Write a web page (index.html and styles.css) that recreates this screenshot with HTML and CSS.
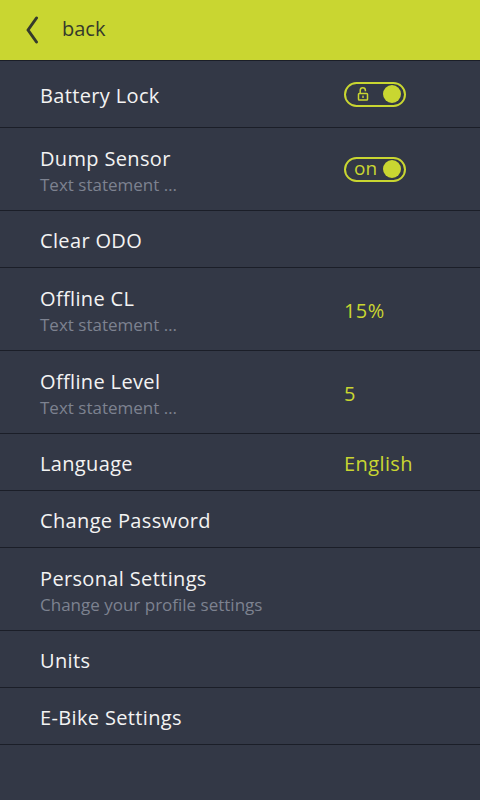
FILE: index.html
```html
<!DOCTYPE html>
<html lang="en">
<head>
  <meta charset="UTF-8">
  <meta name="viewport" content="width=device-width, initial-scale=1.0">
  <title>Settings</title>
  <link rel="stylesheet" href="styles.css">
</head>
<body>

  <header class="topbar">
    <svg class="back-icon" width="14" height="28" viewBox="0 0 14 28">
      <path d="M11.5 2 L3 14 L11.5 26" fill="none" stroke="#353a2c" stroke-width="3" stroke-linecap="round" stroke-linejoin="round"/>
    </svg>
    <span class="back-label">back</span>
  </header>

  <ul class="settings">
    <li class="row row-first">
      <div class="label">
        <span class="title">Battery Lock</span>
      </div>
      <div class="value">
        <span class="toggle">
          <svg class="lock" width="12" height="15" viewBox="0 0 12 15">
            <path d="M3.2 7.5 V4.4 a2.6 2.6 0 0 1 5.2 0 V5.2" fill="none" stroke="#c9d631" stroke-width="1.5"/>
            <rect x="1.5" y="7.5" width="9" height="6.5" rx="0.8" fill="none" stroke="#c9d631" stroke-width="1.5"/>
            <rect x="5.3" y="9.6" width="1.4" height="2.4" fill="#c9d631"/>
          </svg>
          <span class="knob"></span>
        </span>
      </div>
    </li>
    <li class="row row-tall">
      <div class="label">
        <span class="title">Dump Sensor</span>
        <span class="sub">Text statement …</span>
      </div>
      <div class="value">
        <span class="toggle">
          <span class="toggle-text">on</span>
          <span class="knob"></span>
        </span>
      </div>
    </li>
    <li class="row">
      <div class="label"><span class="title">Clear ODO</span></div>
    </li>
    <li class="row row-tall">
      <div class="label">
        <span class="title">Offline CL</span>
        <span class="sub">Text statement …</span>
      </div>
      <div class="value">15%</div>
    </li>
    <li class="row row-tall">
      <div class="label">
        <span class="title">Offline Level</span>
        <span class="sub">Text statement …</span>
      </div>
      <div class="value">5</div>
    </li>
    <li class="row">
      <div class="label"><span class="title">Language</span></div>
      <div class="value">English</div>
    </li>
    <li class="row">
      <div class="label"><span class="title">Change Password</span></div>
    </li>
    <li class="row row-tall">
      <div class="label">
        <span class="title">Personal Settings</span>
        <span class="sub">Change your profile settings</span>
      </div>
    </li>
    <li class="row">
      <div class="label"><span class="title">Units</span></div>
    </li>
    <li class="row">
      <div class="label"><span class="title">E-Bike Settings</span></div>
    </li>
  </ul>

</body>
</html>
```

FILE: styles.css
```css
:root {
  --lime: #c9d631;
  --bg: #333846;
  --line: #1b1e28;
  --text: #f3f3f3;
  --muted: #7d8290;
}
* {
  box-sizing: border-box;
}
body {
  margin: 0;
  min-height: 800px;
  font-family: 'Open Sans', 'Noto Sans', sans-serif;
  background-color: var(--bg);
  color: var(--text);
}
.topbar {
  height: 61px;
  background-color: var(--lime);
  border-bottom: 1px solid var(--line);
  display: flex;
  align-items: center;
  padding-left: 25px;
}
.back-icon {
  display: block;
  margin-top: -1px;
}
.back-label {
  margin-left: 23px;
  font-size: 20px;
  color: #353a2c;
  margin-top: -4px;
}
.settings {
  list-style: none;
  margin: 0;
  padding: 0;
}
.row {
  display: grid;
  grid-template-columns: 1fr 136px;
  align-items: center;
  height: 57px;
  padding: 3px 0 0 40px;
  border-bottom: 1px solid var(--line);
}
.row-first {
  height: 67px;
}
.row-tall {
  height: 83px;
  padding-top: 2px;
}
.label {
  display: flex;
  flex-direction: column;
}
.row-tall .label {
  padding-top: 4px;
}
.title {
  font-size: 20px;
  line-height: 26px;
  letter-spacing: 0.35px;
}
.sub {
  font-size: 17px;
  line-height: 26px;
  color: var(--muted);
}
.value {
  font-size: 20px;
  letter-spacing: 0.4px;
  color: var(--lime);
}
.toggle {
  display: flex;
  align-items: center;
  justify-content: space-between;
  width: 62px;
  height: 25px;
  border: 2px solid var(--lime);
  border-radius: 13px;
  padding: 0 3px 0 11px;
}
.row-first .toggle {
  margin-top: -3px;
}
.row-tall .toggle {
  margin-top: -2px;
}
.lock {
  display: block;
  margin-top: -1px;
}
.toggle-text {
  font-size: 19px;
  line-height: 20px;
  letter-spacing: 0;
  margin-left: -3px;
  margin-top: -2px;
}
.knob {
  width: 18px;
  height: 18px;
  border-radius: 50%;
  background-color: var(--lime);
}
```
